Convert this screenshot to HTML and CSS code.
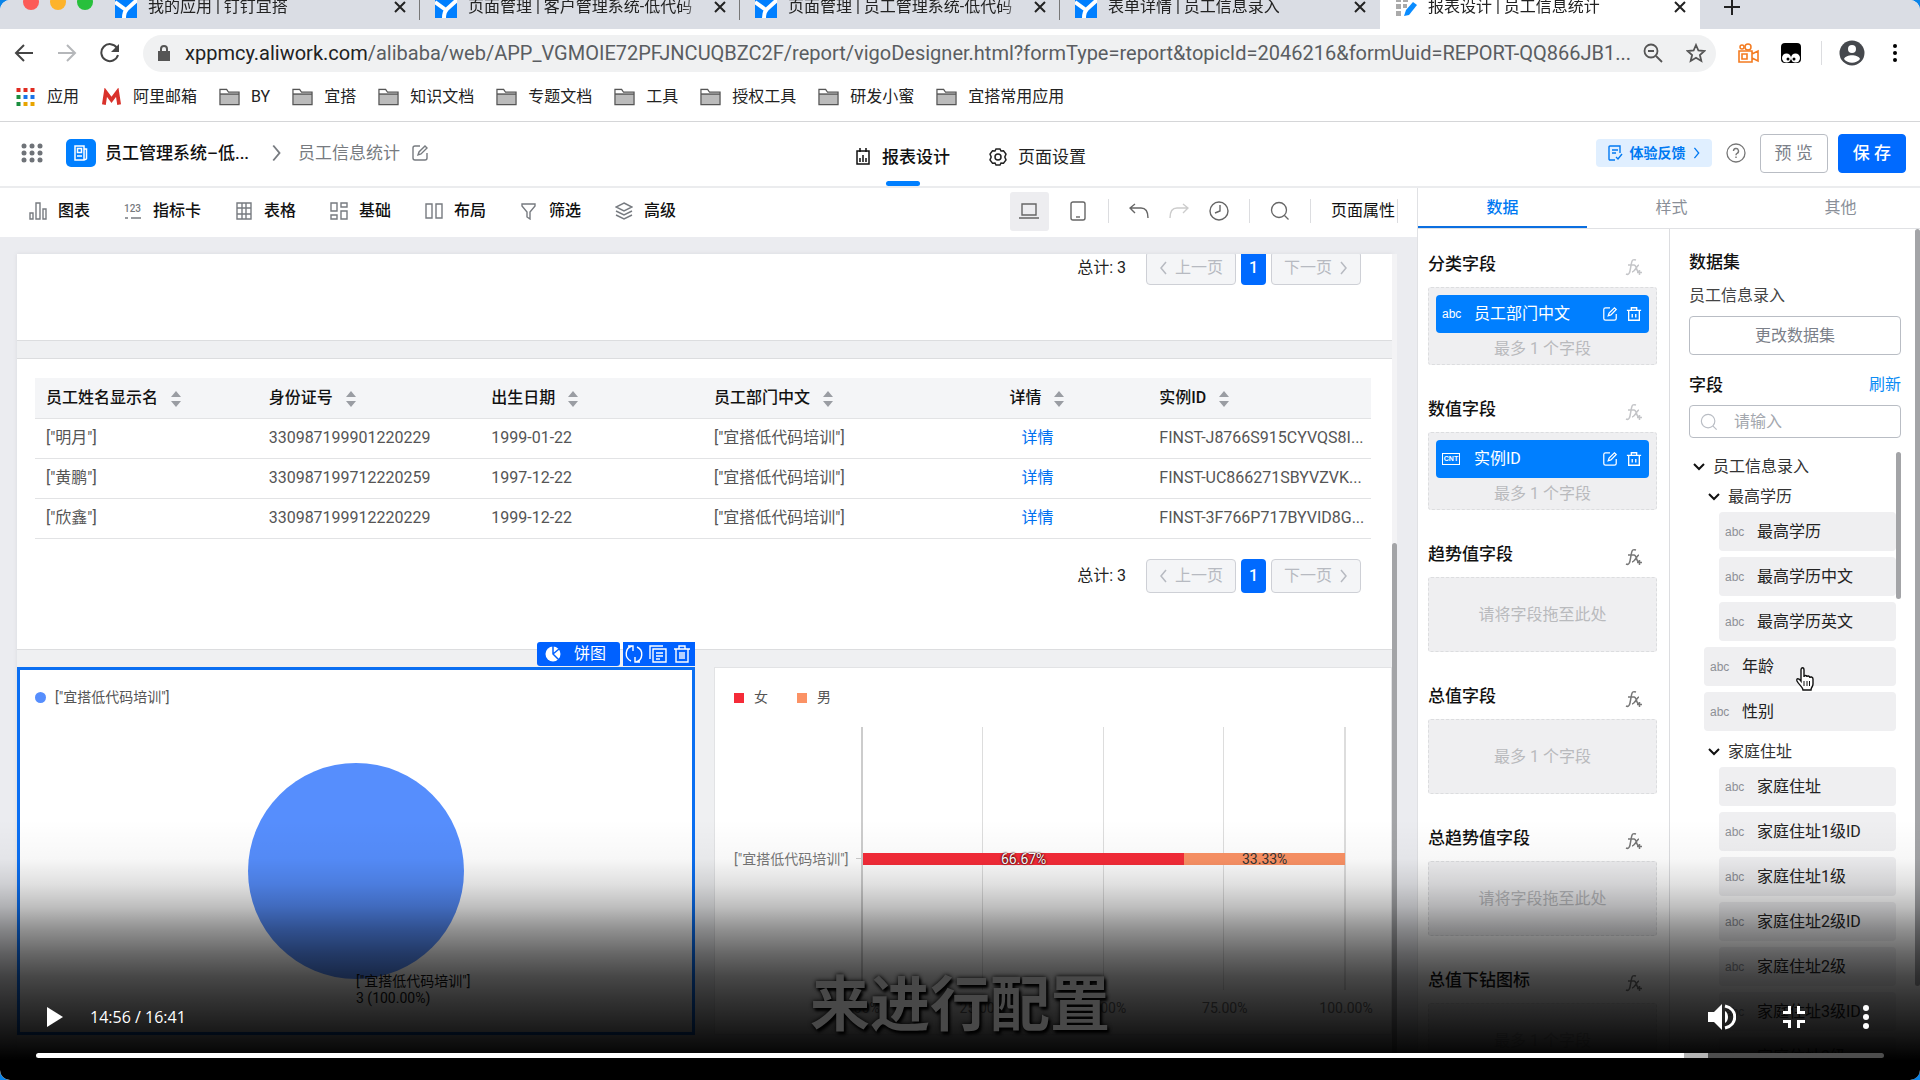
FILE: index.html
```html
<!DOCTYPE html>
<html lang="zh-CN">
<head>
    <meta charset="UTF-8">
    <meta name="viewport" content="width=device-width, initial-scale=1.0">
    <title>报表设计 | 员工信息统计</title>
    <link rel="stylesheet" href="styles.css">
</head>
<body>
    <!-- shared icons -->
    <svg class="sprite" aria-hidden="true">
        <symbol id="i-yida" viewBox="0 0 22 22"><path fill="#007fff" d="M0 0h22v22H0z"/><path d="M0 6l11 8 11-10M9 22c0-5 1-7 3-9" fill="none" stroke="#fff" stroke-width="4"/></symbol>
        <symbol id="i-close" viewBox="0 0 12 12"><path d="M1 1l10 10M11 1L1 11" fill="none" stroke="#222" stroke-width="2"/></symbol>
        <symbol id="i-folder" viewBox="0 0 22 18"><path d="M1 17V2h8l2 3h10v12z" fill="#bbb"/><path d="M1 2h8l2 3H1z" fill="#fff"/><path d="M1 17V1h7l2 3h11v13zM1 6h20" fill="none" stroke="#555" stroke-width="1.3"/></symbol>
        <symbol id="i-edit" viewBox="0 0 18 18"><path d="M9 2H4a2 2 0 0 0-2 2v10a2 2 0 0 0 2 2h10a2 2 0 0 0 2-2V9M7 11l1-3 6-6 2 2-6 6z" fill="none" stroke="currentColor" stroke-width="1.4"/></symbol>
        <symbol id="i-trash" viewBox="0 0 18 18"><path d="M1 5h16M6 5V2h6v3M3 5v11h12V5M7 9v4M11 9v4" fill="none" stroke="currentColor" stroke-width="1.5"/></symbol>
        <symbol id="i-fx" viewBox="0 0 18 18"><path d="M11 2c-3-1-4 0-4.500 3L5 13c-.5 3-2 4-4 3M3 7h6M9 7c3 0 2 7 5 7M14 7c-2 0-4 7-7 7M12 14.500h5M14.500 12v5" fill="none" stroke="currentColor" stroke-width="1.500"/></symbol>
        <symbol id="i-chev" viewBox="0 0 12 8"><path d="M1 1l5 5 5-5" fill="none" stroke="#111" stroke-width="2"/></symbol>
        <symbol id="i-left" viewBox="0 0 8 14"><path d="M7 1L2 7l5 6" fill="none" stroke="currentColor" stroke-width="1.500"/></symbol>
        <symbol id="i-right" viewBox="0 0 8 14"><path d="M1 1l5 6-5 6" fill="none" stroke="currentColor" stroke-width="1.500"/></symbol>
        <symbol id="i-search" viewBox="0 0 20 20"><circle cx="9" cy="9" r="7.500" fill="none" stroke="currentColor" stroke-width="1.300"/><path d="M14.500 14.500l4 4" stroke="currentColor" stroke-width="1.300"/></symbol>
        <symbol id="i-sort" viewBox="0 0 12 18"><path d="M6 1l5 6H1zM6 17l5-6H1z" fill="#9a9da3"/></symbol>
    </svg>

    <div class="player">
        <div class="screen">
            <!-- browser tabs -->
            <div class="tabs">
                <div class="lights"><i class="red"></i><i class="yellow"></i><i class="green"></i></div>
                <div class="tab">
                    <svg class="favicon"><use href="#i-yida"/></svg><span>我的应用 | 钉钉宜搭</span>
                    <button class="close" aria-label="关闭"><svg><use href="#i-close"/></svg></button>
                </div>
                <div class="tab">
                    <svg class="favicon"><use href="#i-yida"/></svg><span>页面管理 | 客户管理系统-低代码</span>
                    <button class="close" aria-label="关闭"><svg><use href="#i-close"/></svg></button>
                </div>
                <div class="tab">
                    <svg class="favicon"><use href="#i-yida"/></svg><span>页面管理 | 员工管理系统-低代码</span>
                    <button class="close" aria-label="关闭"><svg><use href="#i-close"/></svg></button>
                </div>
                <div class="tab last">
                    <svg class="favicon"><use href="#i-yida"/></svg><span>表单详情 | 员工信息录入</span>
                    <button class="close" aria-label="关闭"><svg><use href="#i-close"/></svg></button>
                </div>
                <div class="tab active">
                    <svg class="favicon" viewBox="0 0 22 22"><path fill="#aaa" d="M1 1h5v5H1zM8 1h5v5H8zM1 8h5v5H1zM8 8h4v4H8zM1 15h5v5H1z"/><path d="M9 20l2-6 7-8 4 3-8 10z" fill="#0a8cff"/></svg>
                    <span>报表设计 | 员工信息统计</span>
                    <button class="close" aria-label="关闭"><svg><use href="#i-close"/></svg></button>
                </div>
                <button class="new-tab" aria-label="新标签页"><svg viewBox="0 0 16 16"><path d="M8 0v16M0 8h16" stroke="#222" stroke-width="2"/></svg></button>
            </div>

            <!-- address bar -->
            <div class="address">
                <button aria-label="后退"><svg width="20" height="20" viewBox="0 0 20 20"><path d="M19 10H2M10 2l-8 8 8 8" fill="none" stroke="#444" stroke-width="2"/></svg></button>
                <button aria-label="前进"><svg width="20" height="20" viewBox="0 0 20 20"><path d="M1 10h17M10 2l8 8-8 8" fill="none" stroke="#b5b7ba" stroke-width="2"/></svg></button>
                <button aria-label="刷新"><svg width="20" height="20" viewBox="0 0 20 20"><path d="M17 5a8.500 8.500 0 1 0 1 7" fill="none" stroke="#444" stroke-width="2"/><path d="M19 1v8h-8z" fill="#444"/></svg></button>
                <div class="url">
                    <svg width="12" height="16" viewBox="0 0 12 16"><path d="M0 6h12v10H0z" fill="#555"/><path d="M3 7V4a3 3 0 0 1 6 0v3" fill="none" stroke="#555" stroke-width="2"/></svg>
                    <p><b>xppmcy.aliwork.com</b>/alibaba/web/APP_VGMOIE72PFJNCUQBZC2F/report/vigoDesigner.html?formType=report&amp;topicId=2046216&amp;formUuid=REPORT-QQ866JB1...</p>
                    <svg width="20" height="20" viewBox="0 0 20 20"><circle cx="8" cy="8" r="6.500" fill="none" stroke="#555" stroke-width="1.800"/><path d="M13 13l6 6M5 8h6" stroke="#555" stroke-width="1.800"/></svg>
                    <svg width="20" height="20" viewBox="0 0 20 20"><path d="M10 2l2.400 5.500 6 .5-4.500 4 1.400 6-5.300-3.200L4.700 18l1.400-6-4.500-4 6-.5z" fill="none" stroke="#555" stroke-width="1.800"/></svg>
                </div>
                <svg width="22" height="20" viewBox="0 0 22 20"><path d="M2 8h13v11H2zM15 11l6-3v10l-6-3M5 11h5v5H5z" fill="none" stroke="#f47b20" stroke-width="1.600"/><circle cx="5" cy="4" r="2" fill="none" stroke="#f47b20" stroke-width="1.500"/><circle cx="11" cy="4" r="3" fill="none" stroke="#f47b20" stroke-width="1.500"/></svg>
                <svg width="22" height="20" viewBox="0 0 22 20"><rect x="1" width="20" height="20" rx="4" fill="#000"/><circle cx="6.500" cy="15" r="4.500" fill="#fff"/><circle cx="15.500" cy="15" r="4.500" fill="#fff"/><circle cx="8" cy="16" r="1.500"/><circle cx="14" cy="16" r="1.500"/></svg>
                <i class="vline"></i>
                <svg width="26" height="26" viewBox="0 0 26 26"><circle cx="13" cy="13" r="12.500" fill="#45484d"/><circle cx="13" cy="9" r="4" fill="#fff"/><path d="M5 19c2-5 14-5 16 0-4 5-12 5-16 0z" fill="#fff"/></svg>
                <svg class="more" width="4" height="18" viewBox="0 0 4 18"><circle cx="2" cy="2" r="2"/><circle cx="2" cy="9" r="2"/><circle cx="2" cy="16" r="2"/></svg>
            </div>

            <!-- bookmarks -->
            <nav class="bookmarks">
                <a href="#"><svg width="20" height="18" viewBox="0 0 20 18"><path d="M1 0h4v4H1zM8 0h4v4H8zM15 0h4v4h-4z" fill="#e02b20"/><path d="M1 7h4v4H1zM1 14h4v4H1z" fill="#1b8e3e"/><path d="M8 7h4v4H8zM15 7h4v4h-4z" fill="#1a73e8"/><path d="M8 14h4v4H8zM15 14h4v4h-4z" fill="#e8a400"/></svg>应用</a>
                <a href="#"><svg width="22" height="16" viewBox="0 0 22 16"><path d="M3 16L5 3l6 8 6-8 2 13" fill="none" stroke="#d9322b" stroke-width="4"/></svg>阿里邮箱</a>
                <a href="#"><svg><use href="#i-folder"/></svg>BY</a>
                <a href="#"><svg><use href="#i-folder"/></svg>宜搭</a>
                <a href="#"><svg><use href="#i-folder"/></svg>知识文档</a>
                <a href="#"><svg><use href="#i-folder"/></svg>专题文档</a>
                <a href="#"><svg><use href="#i-folder"/></svg>工具</a>
                <a href="#"><svg><use href="#i-folder"/></svg>授权工具</a>
                <a href="#"><svg><use href="#i-folder"/></svg>研发小蜜</a>
                <a href="#"><svg><use href="#i-folder"/></svg>宜搭常用应用</a>
            </nav>

            <!-- app header -->
            <header class="app-header">
                <div class="crumbs">
                    <svg width="22" height="20" viewBox="0 0 22 20" fill="#6f7378"><circle cx="3" cy="3" r="2.500"/><circle cx="11" cy="3" r="2.500"/><circle cx="19" cy="3" r="2.500"/><circle cx="3" cy="10" r="2.500"/><circle cx="11" cy="10" r="2.500"/><circle cx="19" cy="10" r="2.500"/><circle cx="3" cy="17" r="2.500"/><circle cx="11" cy="17" r="2.500"/><circle cx="19" cy="17" r="2.500"/></svg>
                    <svg class="app-logo" viewBox="0 0 30 28"><rect width="30" height="28" rx="5" fill="#007fff"/><path d="M9 7h9v14H9zM18 10h2.500v9.500A1.500 1.500 0 0 1 18 20M11.500 9.500h4v4h-4zM11 17h5" fill="none" stroke="#fff" stroke-width="1.500"/></svg>
                    <strong>员工管理系统–低...</strong>
                    <svg class="sep" width="10" height="18"><use href="#i-right"/></svg>
                    <span>员工信息统计</span>
                    <svg width="18" height="18"><use href="#i-edit"/></svg>
                </div>
                <nav class="modes">
                    <a href="#" class="on"><svg width="16" height="18" viewBox="0 0 16 18"><path d="M2 3h12v13H2zM5 0v4M11 0v4M5 10v4M8 7v7M11 10v4" fill="none" stroke="#111" stroke-width="1.500"/></svg>报表设计</a>
                    <a href="#"><svg width="18" height="18" viewBox="0 0 18 18"><path d="M7 1h4l1 2 2.500-.2L17 6l-1.200 3L17 12l-2.500 3.200L12 15l-1 2H7l-1-2-2.500.2L1 12l1.200-3L1 6l2.500-3.200L6 3z" fill="none" stroke="#222" stroke-width="1.500"/><circle cx="9" cy="9" r="3" fill="none" stroke="#222" stroke-width="1.500"/></svg>页面设置</a>
                </nav>
                <div class="actions">
                    <a href="#" class="feedback"><svg width="16" height="16" viewBox="0 0 16 16"><path d="M8 15H3a1 1 0 0 1-1-1V2a1 1 0 0 1 1-1h10v7M5 5h6M5 8h4M9 12l2 2 4-5" fill="none" stroke="currentColor" stroke-width="1.400"/></svg>体验反馈<svg width="8" height="12"><use href="#i-right"/></svg></a>
                    <svg class="help" width="20" height="20" viewBox="0 0 20 20"><circle cx="10" cy="10" r="9" fill="none" stroke="#777" stroke-width="1.300"/><path d="M7.500 8a2.500 2.500 0 1 1 3.500 2.300c-1 .4-1 1-1 2M10 13.500v1.500" fill="none" stroke="#777" stroke-width="1.400"/></svg>
                    <button class="btn">预 览</button>
                    <button class="btn primary">保 存</button>
                </div>
            </header>

            <div class="workspace">
                <main class="designer">
                    <div class="toolbar">
                        <button><svg viewBox="0 0 18 18"><path d="M1 11h3v6H1zM7 1h4v16H7zM14 7h3v10h-3z"/></svg>图表</button>
                        <button><svg viewBox="0 0 18 18"><text x="0" y="10" font-size="10">123</text><path d="M1 16h3M7 16h10"/></svg>指标卡</button>
                        <button><svg viewBox="0 0 18 18"><path d="M2 1h14v16H2zM2 6h14M2 12h14M7 1v16M11 1v16"/></svg>表格</button>
                        <button><svg viewBox="0 0 18 18"><path d="M1 1h6v8H1zM1 13h6v4H1zM11 1h6v4h-6zM11 9h6v8h-6z"/></svg>基础</button>
                        <button><svg viewBox="0 0 18 18"><path d="M1 2h6v14H1zM11 2h6v14h-6z"/></svg>布局</button>
                        <button><svg viewBox="0 0 18 18"><path d="M2 2h13v2l-5 6v7l-3-2v-5L2 4z"/></svg>筛选</button>
                        <button><svg viewBox="0 0 18 18"><path d="M9 1l8 4-8 4-8-4zM1 9l8 4 8-4M1 13l8 4 8-4"/></svg>高级</button>
                        <div class="tools">
                            <button class="device on" aria-label="电脑"><svg viewBox="0 0 20 18"><path d="M3 2h14v11H3zM0 16h20"/></svg></button>
                            <button class="device" aria-label="手机"><svg viewBox="0 0 20 20"><rect x="3" y="1" width="14" height="18" rx="2"/><path d="M8 16h4"/></svg></button>
                            <i class="vline"></i>
                            <button aria-label="撤销"><svg viewBox="0 0 20 18"><path d="M6 2L1 6l5 5M1 6h11c5 0 7 4 7 10"/></svg></button>
                            <button aria-label="重做" class="faint"><svg viewBox="0 0 20 18"><path d="M14 2l5 4-5 5M19 6H8c-5 0-7 4-7 10"/></svg></button>
                            <button aria-label="历史"><svg viewBox="0 0 20 20"><circle cx="10" cy="10" r="9"/><path d="M11 4v6l-5 2"/></svg></button>
                            <i class="vline"></i>
                            <button aria-label="搜索"><svg><use href="#i-search"/></svg></button>
                            <i class="vline"></i>
                            <button class="props">页面属性</button>
                            <i class="vline"></i>
                        </div>
                    </div>

                    <div class="canvas">
                        <div class="page">
                            <section class="card cut">
                                <div class="pager">
                                    <span>总计: 3</span>
                                    <button disabled><svg><use href="#i-left"/></svg>上一页</button>
                                    <button class="current">1</button>
                                    <button disabled>下一页<svg><use href="#i-right"/></svg></button>
                                </div>
                            </section>

                            <section class="card data">
                                <table>
                                    <thead>
                                        <tr>
                                            <th>员工姓名显示名<svg><use href="#i-sort"/></svg></th>
                                            <th>身份证号<svg><use href="#i-sort"/></svg></th>
                                            <th>出生日期<svg><use href="#i-sort"/></svg></th>
                                            <th>员工部门中文<svg><use href="#i-sort"/></svg></th>
                                            <th class="mid">详情<svg><use href="#i-sort"/></svg></th>
                                            <th>实例ID<svg><use href="#i-sort"/></svg></th>
                                        </tr>
                                    </thead>
                                    <tbody>
                                        <tr><td>["明月"]</td><td>330987199901220229</td><td>1999-01-22</td><td>["宜搭低代码培训"]</td><td class="mid"><a href="#">详情</a></td><td>FINST-J8766S915CYVQS8I...</td></tr>
                                        <tr><td>["黄鹏"]</td><td>330987199712220259</td><td>1997-12-22</td><td>["宜搭低代码培训"]</td><td class="mid"><a href="#">详情</a></td><td>FINST-UC866271SBYVZVK...</td></tr>
                                        <tr><td>["欣鑫"]</td><td>330987199912220229</td><td>1999-12-22</td><td>["宜搭低代码培训"]</td><td class="mid"><a href="#">详情</a></td><td>FINST-3F766P717BYVID8G...</td></tr>
                                    </tbody>
                                </table>
                                <div class="pager">
                                    <span>总计: 3</span>
                                    <button disabled><svg><use href="#i-left"/></svg>上一页</button>
                                    <button class="current">1</button>
                                    <button disabled>下一页<svg><use href="#i-right"/></svg></button>
                                </div>
                            </section>

                            <div class="charts">
                                <section class="card pie-card">
                                    <div class="badge">
                                        <span><svg width="16" height="16" viewBox="0 0 16 16"><circle cx="8" cy="8" r="7.500" fill="#fff"/><path d="M8 0v8l6 6M8 8l6-5" fill="none" stroke="#0061ff" stroke-width="1.500"/></svg>饼图</span>
                                        <div>
                                            <button aria-label="切换"><svg viewBox="0 0 18 18"><path d="M7 1a8 8 0 0 0-1 15M11 17a8 8 0 0 0 1-15M3 1h5v5M15 17h-5v-5"/></svg></button>
                                            <button aria-label="复制"><svg viewBox="0 0 18 18"><path d="M4 4h13v13H4zM14 1H1v13M7 8h7M7 11h7M7 14h4"/></svg></button>
                                            <button aria-label="删除"><svg viewBox="0 0 18 18"><path d="M1 4h16M6 4V1h6v3M3 4v13h12V4M7 7v7M9 7v7M11 7v7"/></svg></button>
                                        </div>
                                    </div>
                                    <div class="legend"><i class="dot"></i>["宜搭低代码培训"]</div>
                                    <div class="pie"><p>["宜搭低代码培训"]<br>3 (100.00%)</p></div>
                                </section>

                                <section class="card bar-card">
                                    <div class="legend"><i class="sq red"></i>女<i class="sq orange"></i>男</div>
                                    <div class="bar-chart">
                                        <div class="y-label">["宜搭低代码培训"]<i></i></div>
                                        <div class="plot">
                                            <div class="bar">
                                                <span class="seg red" style="width: 66.67%">66.67%</span>
                                                <span class="seg orange" style="width: 33.33%">33.33%</span>
                                            </div>
                                        </div>
                                        <div class="x-axis">
                                            <span>0.00%</span><span>25.00%</span><span>50.00%</span><span>75.00%</span><span>100.00%</span>
                                        </div>
                                    </div>
                                </section>
                            </div>
                        </div>
                        <div class="scroll"><i></i></div>
                    </div>
                </main>

                <!-- right settings panel -->
                <aside class="panel">
                    <nav class="panel-tabs">
                        <a href="#" class="on">数据</a>
                        <a href="#">样式</a>
                        <a href="#">其他</a>
                    </nav>
                    <div class="panel-body">
                        <div class="slots">
                            <div class="slot">
                                <h3>分类字段<svg class="faint"><use href="#i-fx"/></svg></h3>
                                <div class="drop filled">
                                    <div class="chip"><small>abc</small><span>员工部门中文</span><svg><use href="#i-edit"/></svg><svg><use href="#i-trash"/></svg></div>
                                    最多 1 个字段
                                </div>
                            </div>
                            <div class="slot">
                                <h3>数值字段<svg class="faint"><use href="#i-fx"/></svg></h3>
                                <div class="drop filled">
                                    <div class="chip"><small class="cnt">CNT</small><span>实例ID</span><svg><use href="#i-edit"/></svg><svg><use href="#i-trash"/></svg></div>
                                    最多 1 个字段
                                </div>
                            </div>
                            <div class="slot">
                                <h3>趋势值字段<svg><use href="#i-fx"/></svg></h3>
                                <div class="drop">请将字段拖至此处</div>
                            </div>
                            <div class="slot">
                                <h3>总值字段<svg><use href="#i-fx"/></svg></h3>
                                <div class="drop">最多 1 个字段</div>
                            </div>
                            <div class="slot">
                                <h3>总趋势值字段<svg><use href="#i-fx"/></svg></h3>
                                <div class="drop">请将字段拖至此处</div>
                            </div>
                            <div class="slot">
                                <h3>总值下钻图标<svg><use href="#i-fx"/></svg></h3>
                                <div class="drop">最多 1 个字段</div>
                            </div>
                        </div>

                        <div class="dataset">
                            <h3>数据集</h3>
                            <p>员工信息录入</p>
                            <button class="btn change">更改数据集</button>
                            <h3>字段<a href="#">刷新</a></h3>
                            <label class="search"><svg><use href="#i-search"/></svg><input type="text" placeholder="请输入" aria-label="搜索字段"></label>
                            <div class="tree-wrap">
                                <ul class="tree">
                                    <li class="group"><svg><use href="#i-chev"/></svg>员工信息录入</li>
                                    <li class="group sub"><svg><use href="#i-chev"/></svg>最高学历</li>
                                    <li class="field deep"><small>abc</small>最高学历</li>
                                    <li class="field deep"><small>abc</small>最高学历中文</li>
                                    <li class="field deep"><small>abc</small>最高学历英文</li>
                                    <li class="field"><small>abc</small>年龄
                                        <svg class="hand" viewBox="0 0 20 24"><path d="M6 13V3c0-3 3-3 3 0v7c0-2 3-2 3 0 0-2 3-1 3 1 0-2 3-1 3 1v5c0 3-2 3-2 6H8c0-3-4-5-6-9-1-3 2-3 4 0z" fill="#fff" stroke="#111" stroke-width="1.400"/><path d="M9 14v5M12 14v5M14.500 14v5" stroke="#111"/></svg>
                                    </li>
                                    <li class="field"><small>abc</small>性别</li>
                                    <li class="group sub"><svg><use href="#i-chev"/></svg>家庭住址</li>
                                    <li class="field deep"><small>abc</small>家庭住址</li>
                                    <li class="field deep"><small>abc</small>家庭住址1级ID</li>
                                    <li class="field deep"><small>abc</small>家庭住址1级</li>
                                    <li class="field deep"><small>abc</small>家庭住址2级ID</li>
                                    <li class="field deep"><small>abc</small>家庭住址2级</li>
                                    <li class="field deep"><small>abc</small>家庭住址3级ID</li>
                                    <li class="field deep"><small>abc</small>家庭住址3级</li>
                                </ul>
                                <div class="scroll"><i></i></div>
                            </div>
                        </div>
                        <div class="scroll outer"><i></i></div>
                    </div>
                </aside>
            </div>
        </div>

        <!-- video controls over the screen -->
        <div class="shade"></div>
        <p class="subtitle">来进行配置</p>
        <div class="controls">
            <div class="row">
                <button aria-label="播放"><svg width="16" height="20" viewBox="0 0 16 20"><path d="M0 0l16 10L0 20z"/></svg></button>
                <span class="time">14:56 / 16:41</span>
                <button aria-label="音量"><svg width="28" height="26" viewBox="0 0 28 26"><path d="M0 8h6l8-8v26l-8-8H0zM17 7c4 2 4 10 0 12z"/><path d="M17 2c13 3 13 19 0 22" fill="none" stroke="#fff" stroke-width="3"/></svg></button>
                <button aria-label="退出全屏"><svg width="22" height="22" viewBox="0 0 22 22"><path d="M5 0h3v8H0V5h5zM14 0h3v5h5v3h-8zM0 14h8v8H5v-5H0zM14 14h8v3h-5v5h-3z"/></svg></button>
                <button aria-label="更多"><svg width="6" height="24" viewBox="0 0 6 24"><circle cx="3" cy="3" r="3"/><circle cx="3" cy="12" r="3"/><circle cx="3" cy="21" r="3"/></svg></button>
            </div>
            <input type="range" class="progress" min="0" max="1001" value="896" aria-label="播放进度">
        </div>
    </div>
</body>
</html>
```
FILE: styles.css
```css
*{
    box-sizing: border-box;
}
body{
    margin: 0;
    background-color: #0a84e8;
    color: #222;
    font-family: Roboto, "Noto Sans CJK SC", sans-serif;
    font-size: 16px;
    line-height: 24px;
}
h3, p, ul{
    margin: 0;
    padding: 0;
}
a{
    color: inherit;
    text-decoration: none;
}
button{
    display: flex;
    align-items: center;
    justify-content: center;
    padding: 0;
    border: 0;
    background: none;
    color: inherit;
    font: inherit;
    white-space: nowrap;
}
svg{
    flex: none;
}
.sprite{
    position: absolute;
    width: 0;
    height: 0;
}
.vline{
    width: 1px;
    height: 24px;
    background-color: #dcdde0;
}
.player{
    position: relative;
    height: 100vh;
    overflow: hidden;
    border-radius: 10px;
}
.screen{
    display: flex;
    flex-direction: column;
    height: 100%;
    background-color: #fff;
}

/* browser */
.tabs{
    display: flex;
    flex: none;
    align-items: flex-end;
    height: 29px;
    overflow: hidden;
    background-color: #dadde4;
}
.lights{
    display: flex;
    gap: 11px;
    align-items: center;
    width: 100px;
    height: 54px;
    padding-left: 23px;
}
.lights i{
    width: 16px;
    height: 16px;
    border-radius: 50%;
}
.lights .red{
    background-color: #fc5b57;
}
.lights .yellow{
    background-color: #fdb32b;
}
.lights .green{
    background-color: #28c03c;
}
.tab{
    display: flex;
    align-items: center;
    flex: 0 1 320px;
    height: 45px;
    padding: 0 14px 0 15px;
    position: relative;
}
.tab::after{
    content: "";
    position: absolute;
    right: 0;
    bottom: 9px;
    width: 1px;
    height: 24px;
    background-color: #777;
}
.tab.last::after, .tab.active::after{
    display: none;
}
.tab.active{
    background-color: #fff;
    border-radius: 10px 10px 0 0;
}
.tab span{
    flex: 1;
    width: 0;
    margin-left: 11px;
    overflow: hidden;
    white-space: nowrap;
    -webkit-mask-image: linear-gradient(to left, transparent, #000 24px);
    mask-image: linear-gradient(to left, transparent, #000 24px);
}
.favicon{
    width: 22px;
    height: 22px;
}
.close{
    margin-left: 8px;
}
.close svg{
    width: 12px;
    height: 12px;
}
.new-tab{
    height: 45px;
    margin-left: 24px;
}
.new-tab svg{
    width: 16px;
    height: 16px;
}
.address{
    display: flex;
    flex: none;
    align-items: center;
    gap: 21px;
    height: 48px;
    padding: 0 23px 0 14px;
}
.address button{
    margin-right: 2px;
}
.url{
    display: flex;
    flex: 1;
    align-items: center;
    gap: 23px;
    height: 37px;
    min-width: 0;
    padding: 0 10px 0 15px;
    border-radius: 19px;
    background-color: #f0f1f2;
    color: #5a5d61;
}
.url p{
    flex: 1;
    margin: 0 -16px 0 -8px;
    overflow: hidden;
    font-size: 20px;
    white-space: nowrap;
}
.url b{
    color: #222;
    font-weight: 400;
}
.address .vline{
    margin: 0 -4px 0 -2px;
}
.address .more{
    margin-left: 7px;
}
.bookmarks{
    display: flex;
    flex: none;
    align-items: center;
    gap: 22px;
    height: 45px;
    padding: 0 15px 5px;
    border-bottom: 1px solid #d5d6d8;
}
.bookmarks a{
    display: flex;
    align-items: center;
    gap: 11px;
    white-space: nowrap;
}
.bookmarks svg{
    width: 21px;
    height: 18px;
}

/* app header */
.app-header{
    display: grid;
    flex: none;
    grid-template-columns: 1fr auto 1fr;
    height: 66px;
    padding: 0 14px 0 21px;
    border-bottom: 2px solid #ebecee;
    font-size: 17px;
}
.crumbs{
    display: flex;
    align-items: center;
    padding-bottom: 2px;
    color: #777b80;
}
.crumbs .app-logo{
    width: 30px;
    height: 28px;
    margin-left: 23px;
}
.crumbs strong{
    margin-left: 9px;
    color: #111;
    font-weight: 500;
}
.crumbs .sep{
    margin: 0 16px 0 23px;
}
.crumbs span{
    margin-right: 11px;
}
.modes{
    display: flex;
    gap: 39px;
    margin-left: 14px;
}
.modes a{
    display: flex;
    align-items: center;
    gap: 11px;
    padding-top: 5px;
    position: relative;
}
.modes .on{
    color: #111;
    font-weight: 500;
}
.modes .on::after{
    content: "";
    position: absolute;
    left: 50%;
    bottom: 0;
    width: 34px;
    height: 5px;
    margin-left: -17px;
    border-radius: 3px;
    background-color: #007fff;
}
.actions{
    display: flex;
    align-items: center;
    justify-content: flex-end;
    gap: 10px;
    padding-bottom: 2px;
}
.feedback{
    display: flex;
    align-items: center;
    gap: 7px;
    height: 28px;
    padding: 0 11px;
    border-radius: 4px;
    background-color: #e0efff;
    color: #0079f2;
    font-size: 14px;
    font-weight: 700;
}
.help{
    margin: 0 4px;
}
.btn{
    height: 39px;
    padding: 0 14px;
    border: 1px solid #b9bdc4;
    border-radius: 4px;
    color: #7b8089;
}
.btn.primary{
    border-color: #006aff;
    background-color: #006aff;
    color: #fff;
    font-weight: 500;
}

/* designer */
.workspace{
    display: flex;
    flex: 1;
    min-height: 0;
}
.designer{
    display: flex;
    flex: 1;
    flex-direction: column;
    min-width: 0;
}
.toolbar{
    display: flex;
    flex: none;
    align-items: center;
    gap: 34px;
    height: 49px;
    padding: 0 19px 3px 29px;
    color: #111;
}
.toolbar button{
    gap: 11px;
    font-weight: 500;
}
.toolbar svg{
    width: 18px;
    height: 18px;
    fill: none;
    stroke: #777b80;
    stroke-width: 1.400;
}
.toolbar text{
    fill: #777b80;
    stroke: none;
}
.tools{
    display: flex;
    align-items: center;
    gap: 20px;
    margin-left: auto;
}
.tools svg{
    width: 20px;
    height: 20px;
    color: #666;
    stroke: #666;
}
.tools .device{
    width: 39px;
    height: 39px;
    margin-right: -10px;
    border-radius: 3px;
}
.tools .on{
    background-color: #ededf0;
}
.tools .faint svg{
    stroke: #ccc;
}
.tools .props{
    font-weight: 400;
    margin-right: -18px;
}
.canvas{
    display: flex;
    flex: 1;
    min-height: 0;
    padding: 17px 20px 0 17px;
    background-color: #ebecf0;
}
.page{
    flex: 1;
    min-width: 0;
    overflow: hidden;
    background-color: #eff0f2;
    box-shadow: 0 0 4px #d8d9de;
}
.card{
    background-color: #fff;
    border-bottom: 1px solid #dcdddf;
}
.cut{
    display: flex;
    flex-direction: column;
    justify-content: flex-end;
    height: 87px;
    padding-bottom: 55px;
    overflow: hidden;
}
.data{
    height: 292px;
    margin-top: 17px;
    padding: 19px 21px 0 18px;
    border-top: 1px solid #dcdddf;
}
.data .pager{
    margin-top: 20px;
}
.pager{
    display: flex;
    align-items: center;
    justify-content: flex-end;
    gap: 5px;
    padding-right: 10px;
}
.cut .pager{
    padding-right: 31px;
}
.pager span{
    margin-right: 15px;
}
.pager button{
    gap: 8px;
    width: 90px;
    height: 34px;
    border: 1px solid #ced0d6;
    border-radius: 4px;
    background-color: #f4f5f7;
    color: #b7bac1;
}
.pager .current{
    width: 25px;
    border: 0;
    background-color: #006aff;
    color: #fff;
    font-weight: 500;
}
.pager svg{
    width: 8px;
    height: 14px;
}
table{
    width: 100%;
    border-collapse: collapse;
    table-layout: fixed;
}
th, td{
    height: 40px;
    padding: 0 7px 0 11px;
    border-bottom: 1px solid #e2e3e5;
    text-align: left;
    white-space: nowrap;
}
th{
    background-color: #f4f5f7;
    color: #111;
    font-weight: 500;
}
th svg{
    width: 12px;
    height: 18px;
    margin-left: 12px;
    vertical-align: middle;
}
td{
    color: #555;
}
td a{
    color: #0070f0;
}
.mid{
    padding-right: 10px;
    text-align: center;
}
.charts{
    display: grid;
    grid-template-columns: 1fr 1fr;
    gap: 19px;
    margin-top: 17px;
}
.charts .card{
    min-width: 0;
    height: 368px;
    border: 1px solid #e2e3e5;
    font-size: 14px;
    color: #555;
}
.charts .pie-card{
    position: relative;
    padding: 17px 15px;
    border: 3px solid #0b6ff2;
}
.badge{
    display: flex;
    gap: 3px;
    position: absolute;
    right: -3px;
    top: -28px;
    height: 24px;
    color: #fff;
    font-size: 16px;
}
.badge span{
    display: flex;
    align-items: center;
    gap: 13px;
    padding: 0 14px 0 8px;
    border-radius: 3px;
    background-color: #0061ff;
}
.badge div{
    display: flex;
    gap: 6px;
    padding: 0 4px 0 2px;
    background-color: #0061ff;
}
.badge button svg{
    width: 18px;
    height: 18px;
    fill: none;
    stroke: #fff;
    stroke-width: 1.400;
}
.legend{
    display: flex;
    align-items: center;
    line-height: 20px;
}
.dot{
    width: 11px;
    height: 11px;
    margin-right: 9px;
    border-radius: 50%;
    background-color: #568efd;
}
.sq{
    width: 10px;
    height: 10px;
    margin-right: 10px;
    margin-top: 2px;
}
.sq.orange{
    margin-left: 29px;
}
.red{
    background-color: #f52b38;
}
.orange{
    background-color: #fb9265;
}
.pie{
    position: relative;
    width: 216px;
    height: 216px;
    margin: 56px auto 0;
    border-radius: 50%;
    background-color: #568efd;
}
.pie p{
    position: absolute;
    left: 50%;
    top: 210px;
    color: #111;
    line-height: 17px;
    white-space: nowrap;
}
.charts .bar-card{
    padding: 19px 45px 0 19px;
}
.bar-chart{
    display: grid;
    grid-template-columns: 127px 1fr;
    grid-template-rows: 263px 36px;
    margin-top: 20px;
    color: #777;
}
.y-label{
    display: flex;
    align-items: center;
    justify-content: space-between;
    white-space: nowrap;
}
.y-label i{
    width: 5px;
    height: 1px;
    background-color: #ccc;
}
.plot{
    display: flex;
    align-items: center;
    border-left: 2px solid #ccc;
    border-right: 1px solid #ddd;
    background-image: repeating-linear-gradient(to right, transparent 0 calc(25% - 1px), #ddd calc(25% - 1px) 25%);
}
.bar{
    display: flex;
    width: 100%;
    height: 12px;
}
.seg{
    color: #333;
    line-height: 12px;
    text-align: center;
}
.seg.red{
    color: #fff;
    text-shadow: 0 0 2px #300, 0 0 2px #300;
}
.x-axis{
    grid-column: 2;
    display: flex;
    align-items: center;
    justify-content: space-between;
}
.x-axis span{
    display: flex;
    justify-content: center;
    width: 0;
}
.scroll{
    width: 5px;
}
.scroll i{
    display: block;
    border-radius: 3px;
    background-color: #a3a4a7;
}
.canvas .scroll{
    overflow: hidden;
    background-color: #f3f3f5;
}
.canvas .scroll i{
    height: 100%;
    margin-top: 289px;
}

/* settings panel */
.panel{
    display: flex;
    flex: none;
    flex-direction: column;
    width: 503px;
    border-left: 1px solid #e0e1e4;
}
.panel-tabs{
    display: flex;
    flex: none;
    height: 41px;
    overflow: hidden;
    border-bottom: 1px solid #e0e1e4;
}
.panel-tabs a{
    flex: 0 0 169px;
    padding-top: 8px;
    color: #8a8f98;
    text-align: center;
}
.panel-tabs .on{
    border-bottom: 2px solid #0b6fe0;
    color: #0079f2;
    font-weight: 500;
}
.panel-body{
    display: flex;
    flex: 1;
    min-height: 0;
    overflow: hidden;
}
.slots{
    width: 252px;
    padding: 23px 12px 0 10px;
    border-right: 1px solid #dcdde0;
}
.panel h3{
    display: flex;
    justify-content: space-between;
    color: #111;
    font-size: 17px;
    font-weight: 500;
    line-height: 24px;
}
.slot{
    margin-bottom: 32px;
}
.slot h3 svg{
    width: 18px;
    height: 18px;
    margin: 6px 14px 0 0;
    color: #777;
}
.slot h3 .faint{
    color: #c4c5c8;
}
.drop{
    display: flex;
    flex-direction: column;
    align-items: center;
    justify-content: center;
    height: 75px;
    margin-top: 11px;
    border: 1px dashed #dcdddf;
    border-radius: 3px;
    background-color: #efeff1;
    color: #b9babd;
}
.drop.filled{
    height: 78px;
    padding: 7px 7px 3px;
    justify-content: space-between;
}
.chip{
    display: flex;
    align-items: center;
    gap: 8px;
    width: 100%;
    height: 38px;
    padding: 0 7px 0 6px;
    border-radius: 4px;
    background-color: #007fff;
    color: #fff;
}
.chip span{
    flex: 1;
}
.chip svg{
    width: 16px;
    height: 16px;
}
small{
    width: 24px;
    font-family: "Liberation Sans", sans-serif;
    font-size: 12px;
}
.chip .cnt{
    width: 18px;
    height: 12px;
    margin-right: 6px;
    border: 1px solid #fff;
    font-size: 7px;
    font-weight: 700;
    line-height: 10px;
    text-align: center;
}
.dataset{
    flex: 1;
    padding: 21px 14px 0 19px;
}
.dataset p{
    margin-top: 10px;
    color: #444;
}
.change{
    width: 100%;
    margin: 8px 0 18px;
}
.panel h3 a{
    color: #0b8cf5;
    font-size: 16px;
    font-weight: 400;
}
.search{
    display: flex;
    align-items: center;
    gap: 16px;
    height: 33px;
    margin-top: 8px;
    padding: 0 10px;
    border: 1px solid #b9bdc4;
    border-radius: 4px;
    color: #b9bdc4;
}
.search svg{
    width: 18px;
    height: 18px;
}
.search input{
    width: 100%;
    min-width: 0;
    padding: 0;
    border: 0;
    background: none;
    font: inherit;
}
.search input::placeholder{
    color: #a3a7ae;
}
.tree-wrap{
    display: flex;
    margin-top: 14px;
}
.tree{
    flex: 1;
    list-style: none;
}
.tree-wrap .scroll i{
    height: 147px;
}
.group{
    display: flex;
    align-items: center;
    gap: 8px;
    height: 30px;
    padding-left: 4px;
    color: #333;
}
.group.sub{
    padding-left: 19px;
}
.group svg{
    width: 12px;
    height: 8px;
}
.field{
    display: flex;
    align-items: center;
    gap: 8px;
    position: relative;
    height: 39px;
    margin: 0 0 6px 15px;
    padding-left: 6px;
    border-radius: 4px;
    background-color: #efeff1;
}
.field.deep{
    margin-left: 30px;
}
.field small{
    color: #8d9096;
}
.hand{
    position: absolute;
    left: 91px;
    top: 20px;
    width: 20px;
    height: 24px;
    z-index: 1;
}
.scroll.outer i{
    height: 757px;
}

/* video controls */
.shade{
    position: absolute;
    left: 0;
    right: 0;
    bottom: 0;
    z-index: 2;
    height: 280px;
    background-image: linear-gradient(to bottom, rgba(0, 0, 0, 0) 7%, rgba(0, 0, 0, .03) 21%, rgba(0, 0, 0, .12) 30%, rgba(0, 0, 0, .25) 38%, rgba(0, 0, 0, .43) 46%, rgba(0, 0, 0, .6) 55%, rgba(0, 0, 0, .72) 63%, rgba(0, 0, 0, .8) 71%, rgba(0, 0, 0, .88) 80%, rgba(0, 0, 0, .94) 87%, #000 93%);
}
.subtitle{
    position: absolute;
    left: 0;
    right: 0;
    bottom: 38px;
    z-index: 3;
    color: #484848;
    font-size: 60px;
    font-weight: 700;
    line-height: 72px;
    text-align: center;
    text-shadow: 2px 3px 3px #000, 0 0 4px #000;
}
.controls{
    position: absolute;
    left: 36px;
    right: 36px;
    bottom: 22px;
    z-index: 4;
    color: #fff;
}
.controls .row{
    display: flex;
    align-items: center;
    height: 32px;
    padding: 0 4px 0 11px;
}
.controls svg{
    fill: #fff;
}
.time{
    margin-left: 27px;
    margin-right: auto;
    font-family: "Open Sans", sans-serif;
}
.time ~ button{
    width: 28px;
    margin-left: 44px;
}
.progress{
    display: block;
    width: 100%;
    height: 5px;
    margin: 20px 0 0;
    border-radius: 3px;
    appearance: none;
    background-image: linear-gradient(to right, #fff 0 89.2%, #b5b5b5 89.2% 90.5%, #4d4d4d 90.5%);
}
.progress::-webkit-slider-thumb{
    appearance: none;
    width: 0;
    height: 0;
}
```
